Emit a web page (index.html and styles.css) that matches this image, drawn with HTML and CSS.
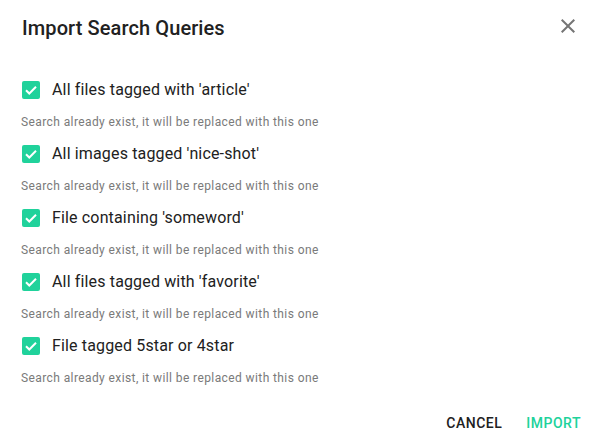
FILE: index.html
```html
<!DOCTYPE html>
<html>
<head>
<meta charset="utf-8">
<link rel="stylesheet" href="styles.css">
</head>
<body>
<div class="dialog">
  <div class="header">
    <h1 class="title">Import Search Queries</h1>
    <button class="close" aria-label="Close">
      <svg width="24" height="24" viewBox="0 0 24 24"><path d="M19 6.41L17.59 5 12 10.59 6.41 5 5 6.41 10.59 12 5 17.59 6.41 19 12 13.41 17.59 19 19 17.59 13.41 12z" fill="#757575"/></svg>
    </button>
  </div>
  <div class="list">
    <div class="item">
      <div class="row"><span class="box"><svg width="18" height="18" viewBox="0 0 18 18"><path d="M4 9.2l3.3 3.3L14 5.8" fill="none" stroke="#fff" stroke-width="2"/></svg></span><span class="label">All files tagged with 'article'</span></div>
      <div class="helper">Search already exist, it will be replaced with this one</div>
    </div>
    <div class="item">
      <div class="row"><span class="box"><svg width="18" height="18" viewBox="0 0 18 18"><path d="M4 9.2l3.3 3.3L14 5.8" fill="none" stroke="#fff" stroke-width="2"/></svg></span><span class="label">All images tagged 'nice-shot'</span></div>
      <div class="helper">Search already exist, it will be replaced with this one</div>
    </div>
    <div class="item">
      <div class="row"><span class="box"><svg width="18" height="18" viewBox="0 0 18 18"><path d="M4 9.2l3.3 3.3L14 5.8" fill="none" stroke="#fff" stroke-width="2"/></svg></span><span class="label">File containing 'someword'</span></div>
      <div class="helper">Search already exist, it will be replaced with this one</div>
    </div>
    <div class="item">
      <div class="row"><span class="box"><svg width="18" height="18" viewBox="0 0 18 18"><path d="M4 9.2l3.3 3.3L14 5.8" fill="none" stroke="#fff" stroke-width="2"/></svg></span><span class="label">All files tagged with 'favorite'</span></div>
      <div class="helper">Search already exist, it will be replaced with this one</div>
    </div>
    <div class="item">
      <div class="row"><span class="box"><svg width="18" height="18" viewBox="0 0 18 18"><path d="M4 9.2l3.3 3.3L14 5.8" fill="none" stroke="#fff" stroke-width="2"/></svg></span><span class="label">File tagged 5star or 4star</span></div>
      <div class="helper">Search already exist, it will be replaced with this one</div>
    </div>
  </div>
  <div class="actions">
    <button class="btn cancel">Cancel</button>
    <button class="btn primary">Import</button>
  </div>
</div>
</body>
</html>
```
FILE: styles.css
```css
* { box-sizing: border-box; }
html, body { margin: 0; padding: 0; background: #fff; }
body { font-family: Roboto, "Liberation Sans", sans-serif; color: #212121; }
.dialog { width: 594px; height: 446px; padding: 12px 0 0 22px; }
.header { display: flex; justify-content: space-between; align-items: flex-start; padding-right: 14px; }
.title { margin: 0; font-size: 20px; font-weight: 500; line-height: 32px; color: #212121; letter-spacing: 0.1px; }
.close { border: 0; background: none; padding: 0; margin-top: 2px; width: 24px; height: 24px; display: flex; cursor: pointer; }
.list { margin-top: 26px; display: flex; flex-direction: column; }
.item { height: 64px; }
.row { height: 40px; display: flex; align-items: center; }
.box { width: 18px; height: 18px; border-radius: 2px; background: #20d29b; display: flex; margin-right: 12px; }
.label { font-size: 16px; line-height: 24px; color: #212121; letter-spacing: 0.15px; }
.helper { margin-top: 4px; margin-left: -1px; font-size: 12px; line-height: 16px; color: #7a7a7a; letter-spacing: 0.4px; }
.actions { display: flex; justify-content: flex-end; gap: 8px; padding-right: 5px; margin-top: 15px; }
.btn { border: 0; background: none; height: 36px; padding: 0 8px; font-family: Roboto, "Liberation Sans", sans-serif; font-size: 14px; font-weight: 500; text-transform: uppercase; letter-spacing: 0.5px; }
.cancel { color: #212121; }
.primary { color: #20d29b; }
```
